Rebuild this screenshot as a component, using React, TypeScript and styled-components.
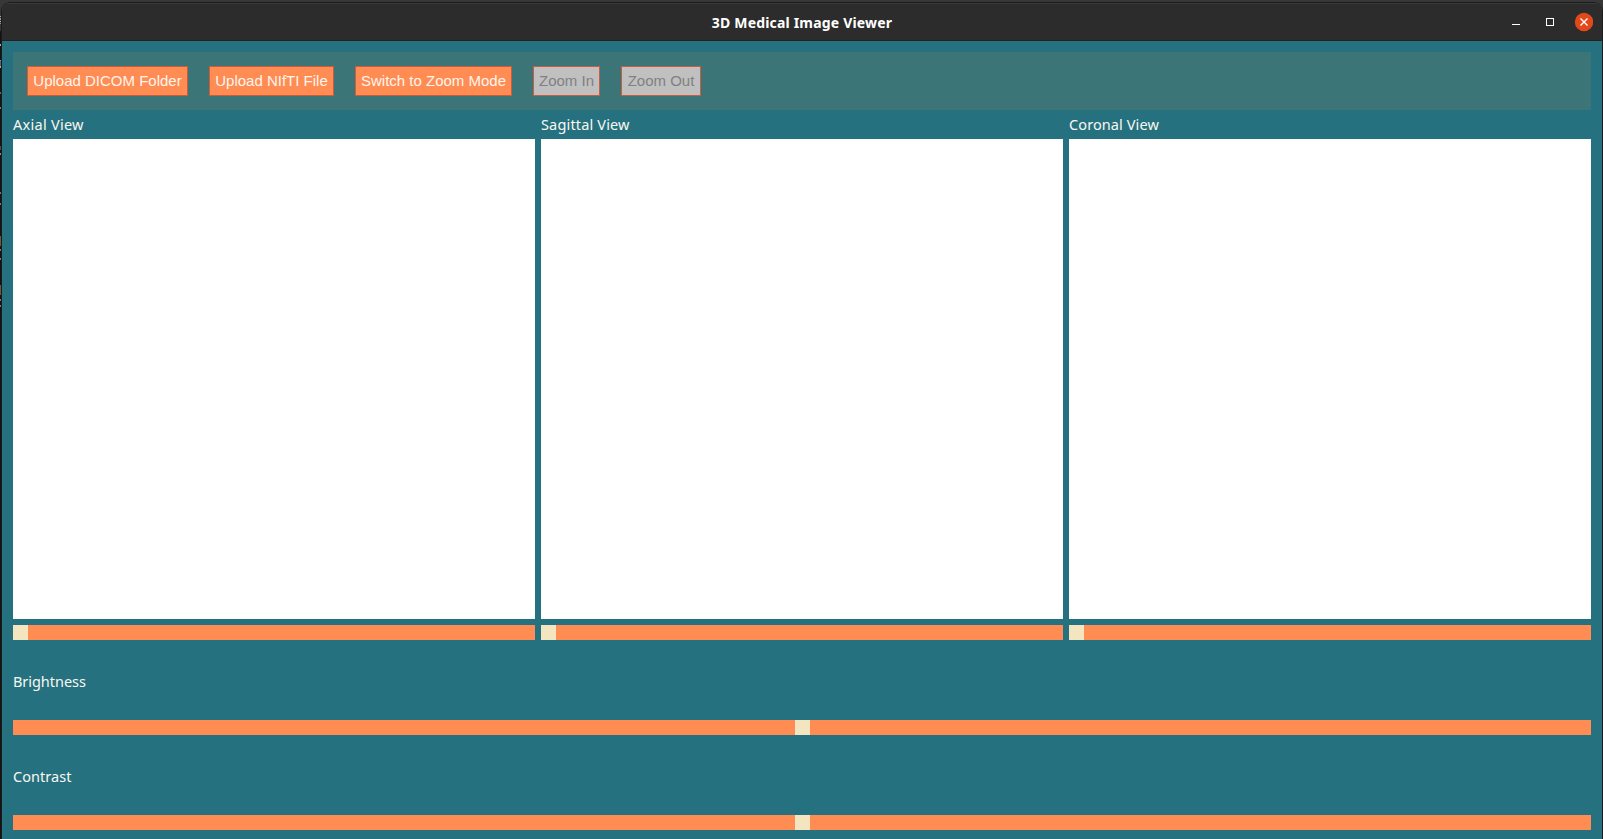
import React from "react";
import styled, { createGlobalStyle } from "styled-components";

const GlobalStyle = createGlobalStyle`
  * { box-sizing: border-box; }
  body { margin: 0; background: #131313; overflow: hidden; }
`;

const Desktop = styled.div`
  position: relative;
  width: 1603px;
  height: 839px;
  padding: 3px 1px 0 2px;
  overflow: hidden;
  background: linear-gradient(#373737 0 31px, #131313 31px);
`;

const TerminalMark = styled.i<{ $y: number; $h: number; $color: string }>`
  position: absolute;
  left: 0;
  top: ${(p) => p.$y}px;
  width: 1px;
  height: ${(p) => p.$h}px;
  background: ${(p) => p.$color};
`;

const AppWindow = styled.div`
  position: relative;
  height: 836px;
  display: flex;
  flex-direction: column;
  border-radius: 8px 8px 0 0;
  background: #26717f;
  box-shadow: 0 0 0 1px #1b1b1b;
  overflow: hidden;
  font-family: "Noto Sans", sans-serif;
`;

const TitleBar = styled.header`
  flex: none;
  height: 38px;
  display: grid;
  grid-template-columns: 1fr auto 1fr;
  align-items: center;
  background: #2c2c2c;
  border-top: 1px solid #3a3a3a;
  border-bottom: 1px solid #222;
`;

const Title = styled.h1`
  grid-column: 2;
  margin: 0;
  padding-top: 2px;
  color: #fff;
  font-size: 14px;
  line-height: 20px;
  font-weight: 700;
  letter-spacing: 0.18px;
`;

const WindowControls = styled.div`
  justify-self: end;
  height: 20px;
  padding-right: 9px;
`;

const Content = styled.main`
  flex: 1;
  display: flex;
  flex-direction: column;
  padding: 11px 11px 0;
`;

const Toolbar = styled.div`
  flex: none;
  height: 58px;
  display: flex;
  align-items: center;
  gap: 21px;
  padding-left: 14px;
  background: #3b7578;
`;

const ToolButton = styled.button<{ $width: number }>`
  width: ${(p) => p.$width}px;
  height: 30px;
  padding: 0;
  border: 1px solid #cd5c3c;
  border-radius: 0;
  background: #ff8c52;
  color: #fff5ee;
  font: 15px/28px "Liberation Sans", sans-serif;
  white-space: nowrap;
  &:disabled {
    background: #c0c0c0;
    color: #808080;
  }
`;

const Views = styled.section`
  flex: none;
  display: grid;
  grid-template-columns: repeat(3, 1fr);
  column-gap: 6px;
`;

const Label = styled.div<{ $spacing: number }>`
  height: 29px;
  line-height: 29px;
  color: #f8f8f2;
  font-size: 14.5px;
  letter-spacing: ${(p) => p.$spacing}px;
  white-space: nowrap;
`;

const SliderLabel = styled(Label)`
  height: 80px;
  line-height: 82px;
`;

const Viewport = styled.div`
  height: 480px;
  margin-bottom: 6px;
  background: #fff;
`;

const Track = styled.div<{ $centered?: boolean }>`
  height: 15px;
  display: flex;
  justify-content: ${(p) => (p.$centered ? "center" : "flex-start")};
  background: #ff8c52;
`;

const Handle = styled.div`
  width: 15px;
  background: #f3e5c0;
`;

const marks: [number, number, string][] = [
  [16, 1, "#aaa"], [18, 2, "#999"], [21, 1, "#bbb"], [23, 1, "#999"],
  [44, 2, "#aaa"], [60, 1, "#999"], [61, 5, "#3d6690"], [66, 2, "#aaa"],
  [92, 2, "#666"], [107, 2, "#777"], [146, 4, "#36506d"], [153, 2, "#888"],
  [192, 2, "#777"], [203, 2, "#777"], [236, 10, "#6d5a3c"], [249, 2, "#777"],
  [258, 2, "#777"], [285, 10, "#6d5a3c"], [299, 2, "#777"], [305, 2, "#777"],
];

const buttons = [
  { label: "Upload DICOM Folder", width: 161 },
  { label: "Upload NIfTI File", width: 125 },
  { label: "Switch to Zoom Mode", width: 157 },
  { label: "Zoom In", width: 67, disabled: true },
  { label: "Zoom Out", width: 80, disabled: true },
];

const views = [
  { name: "Axial View", spacing: 0.27 },
  { name: "Sagittal View", spacing: 0.16 },
  { name: "Coronal View", spacing: 0.1 },
];

const adjustments = [
  { name: "Brightness", spacing: -0.05 },
  { name: "Contrast", spacing: 0.05 },
];

export default function App() {
  return (
    <Desktop>
      <GlobalStyle />
      {marks.map(([y, h, color]) => (
        <TerminalMark key={y} $y={y} $h={h} $color={color} />
      ))}
      <AppWindow>
        <TitleBar>
          <Title>3D Medical Image Viewer</Title>
          <WindowControls>
            <svg width="82" height="20" viewBox="0 0 82 20" fill="none">
              <path d="M1 12.5h8" stroke="#fff" />
              <rect x="35.5" y="6.5" width="7" height="7" stroke="#fff" />
              <circle cx="73" cy="10" r="9.2" fill="#e2491a" />
              <path d="M69.5 6.5l7 7M76.5 6.5l-7 7" stroke="#fff" strokeWidth="1.4" />
            </svg>
          </WindowControls>
        </TitleBar>
        <Content>
          <Toolbar>
            {buttons.map((b) => (
              <ToolButton key={b.label} $width={b.width} disabled={b.disabled}>
                {b.label}
              </ToolButton>
            ))}
          </Toolbar>
          <Views>
            {views.map((v) => (
              <div key={v.name}>
                <Label $spacing={v.spacing}>{v.name}</Label>
                <Viewport />
                <Track><Handle /></Track>
              </div>
            ))}
          </Views>
          {adjustments.map((a) => (
            <div key={a.name}>
              <SliderLabel $spacing={a.spacing}>{a.name}</SliderLabel>
              <Track $centered><Handle /></Track>
            </div>
          ))}
        </Content>
      </AppWindow>
    </Desktop>
  );
}
